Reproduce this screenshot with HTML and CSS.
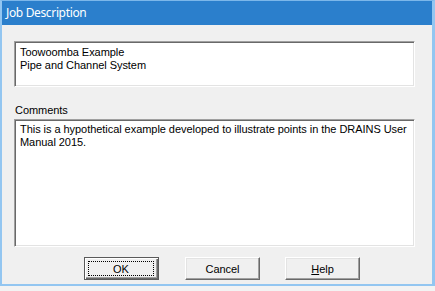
FILE: index.html
```html
<!DOCTYPE html>
<html>
<head>
<meta charset="utf-8">
<link rel="stylesheet" href="styles.css">
<title>Job Description</title>
</head>
<body>
<div class="window">
  <div class="titlebar"><span class="title">Job Description</span></div>
  <div class="client">
    <div class="edit edit-title">Toowoomba Example<br>Pipe and Channel System</div>
    <div class="label">Comments</div>
    <div class="edit edit-comments">This is a hypothetical example developed to illustrate points in the DRAINS User<br>Manual 2015.</div>
    <div class="buttons">
      <button class="btn default"><span class="focus">OK</span></button>
      <button class="btn"><span class="cap">Cancel</span></button>
      <button class="btn"><span class="cap"><u>H</u>elp</span></button>
    </div>
  </div>
</div>
<div class="desktop"></div>
</body>
</html>
```
FILE: styles.css
```css
html, body {
  margin: 0;
  padding: 0;
  width: 435px;
  height: 291px;
  overflow: hidden;
  background: #f3f3f3;
}
.window {
  width: 435px;
  box-sizing: border-box;
  border: 2px solid #93c6f1;
  border-top: 1px solid #7cb7ea;
  border-right-width: 3px;
  background: #f0f0f0;
  font-family: "Liberation Sans", Arial, sans-serif;
  font-size: 11px;
  letter-spacing: -0.05px;
  color: #000;
}
.titlebar {
  height: 24px;
  background: #2b7fcc;
  display: flex;
  align-items: center;
  padding-left: 4px;
}
.title {
  font-family: "Noto Sans", sans-serif;
  font-size: 12px;
  letter-spacing: -0.35px;
  color: #fff;
  position: relative;
  top: -1px;
}
.client {
  padding: 16px 15px 0 12px;
  display: flex;
  flex-direction: column;
  height: 259px;
  box-sizing: border-box;
}
.edit {
  background: #fff;
  border-style: solid;
  border-width: 1px;
  border-color: #a0a0a0 #fff #fff #a0a0a0;
  box-shadow: inset 1px 1px 0 #696969, inset -1px -1px 0 #e3e3e3;
  line-height: 13px;
  padding: 4px 5px;
  box-sizing: border-box;
  width: 401px;
  white-space: nowrap;
}
.edit-title {
  height: 46px;
}
.label {
  margin-top: 17px;
  margin-left: 1px;
  line-height: 13px;
  height: 15px;
}
.edit-comments {
  height: 128px;
  padding-top: 3px;
}
.buttons {
  display: flex;
  gap: 26px;
  margin-top: 10px;
  padding-left: 70px;
}
.btn {
  width: 75px;
  height: 23px;
  box-sizing: border-box;
  padding: 0;
  margin: 0;
  background: #f0f0f0;
  border-style: solid;
  border-width: 1px;
  border-color: #fff #696969 #696969 #fff;
  box-shadow: inset -1px -1px 0 #a0a0a0, inset 1px 1px 0 #e3e3e3;
  font-family: "Liberation Sans", Arial, sans-serif;
  font-size: 11px;
  letter-spacing: -0.05px;
  color: #000;
  display: flex;
  align-items: center;
  justify-content: center;
}
.btn:nth-child(3) { margin-left: -1px; }
.btn.default {
  border: 1px solid #5a5a5a;
  box-shadow: inset 1px 1px 0 #fff, inset -1px -1px 0 #696969, inset -2px -2px 0 #a0a0a0;
  padding: 3px;
}
.focus {
  flex: 1;
  align-self: stretch;
  border: 1px dotted #000;
  display: flex;
  align-items: center;
  justify-content: center;
  margin: 0 1px 0 0;
}
.cap {
  position: relative;
}
.desktop {
  height: 6px;
}
```
